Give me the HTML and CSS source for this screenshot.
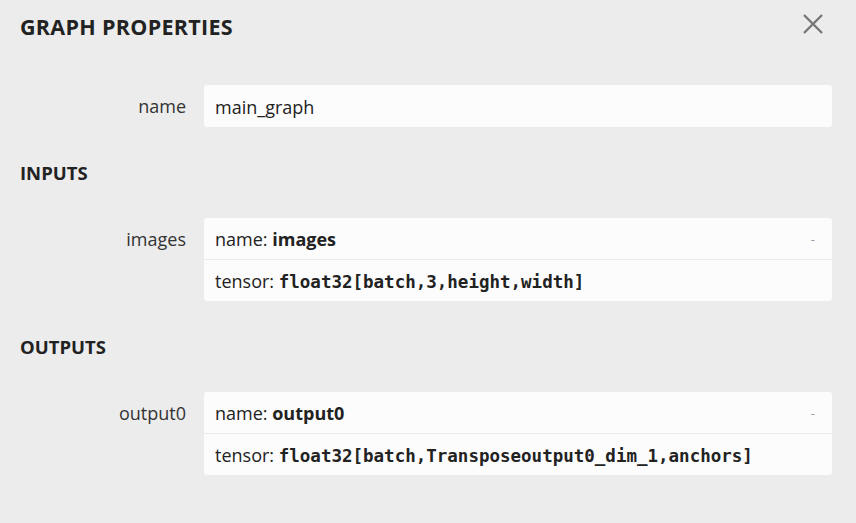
FILE: index.html
```html
<!DOCTYPE html>
<html>
<head>
<meta charset="utf-8">
<link rel="stylesheet" href="styles.css">
</head>
<body>
<div class="panel">
  <div class="header">
    <span class="title">GRAPH PROPERTIES</span>
    <span class="close"><svg width="20" height="20" viewBox="0 0 20 20"><path d="M1 1L19 19M19 1L1 19" stroke="#777" stroke-width="2.4" fill="none"/></svg></span>
  </div>
  <div class="row first">
    <div class="label">name</div>
    <div class="value"><div class="item">main_graph</div></div>
  </div>
  <div class="section">INPUTS</div>
  <div class="row">
    <div class="label">images</div>
    <div class="value">
      <div class="item top"><span>name: <b>images</b></span><span class="expander">-</span></div>
      <div class="item">tensor: <code>float32[batch,3,height,width]</code></div>
    </div>
  </div>
  <div class="section">OUTPUTS</div>
  <div class="row">
    <div class="label">output0</div>
    <div class="value">
      <div class="item top"><span>name: <b>output0</b></span><span class="expander">-</span></div>
      <div class="item">tensor: <code>float32[batch,Transposeoutput0_dim_1,anchors]</code></div>
    </div>
  </div>
</div>
</body>
</html>
```
FILE: styles.css
```css
html, body {
  margin: 0;
  padding: 0;
  background: #ececec;
  width: 856px;
  height: 523px;
  overflow: hidden;
}
.panel {
  font-family: "Open Sans", "Noto Sans", sans-serif;
  color: #222;
  font-size: 18px;
}
.header {
  height: 50px;
  display: flex;
  align-items: center;
  justify-content: space-between;
  padding: 2px 33px 0 20px;
  box-sizing: border-box;
}
.title {
  font-weight: 700;
  font-size: 21.5px;
  letter-spacing: 0.3px;
  color: #222;
}
.close {
  display: flex;
  width: 20px;
  height: 20px;
  margin-top: -4px;
}
.row {
  display: grid;
  grid-template-columns: 186px 628px;
  column-gap: 18px;
}
.row.first {
  margin-top: 35px;
}
.label {
  text-align: right;
  line-height: 39px;
  padding-top: 2px;
  color: #333;
}
.value {
  background: #fcfcfc;
  border-radius: 3px;
}
.item {
  line-height: 39px;
  padding: 2px 11px 0;
  white-space: nowrap;
}
.row.first .item {
  line-height: 40px;
}
.item.top {
  border-bottom: 1px solid #ececec;
  display: flex;
  justify-content: space-between;
}
.item + .item {
  line-height: 38px;
}
.item b {
  font-weight: 700;
}
.item code {
  font-family: "DejaVu Sans Mono", "Liberation Mono", monospace;
  font-weight: 700;
  font-size: 17.5px;
}
.expander {
  color: #999;
  font-size: 13px;
  padding-right: 6px;
}
.section {
  margin: 26px 0 25px;
  padding-left: 20px;
  line-height: 40px;
  font-weight: 700;
  font-size: 18.5px;
}
```
